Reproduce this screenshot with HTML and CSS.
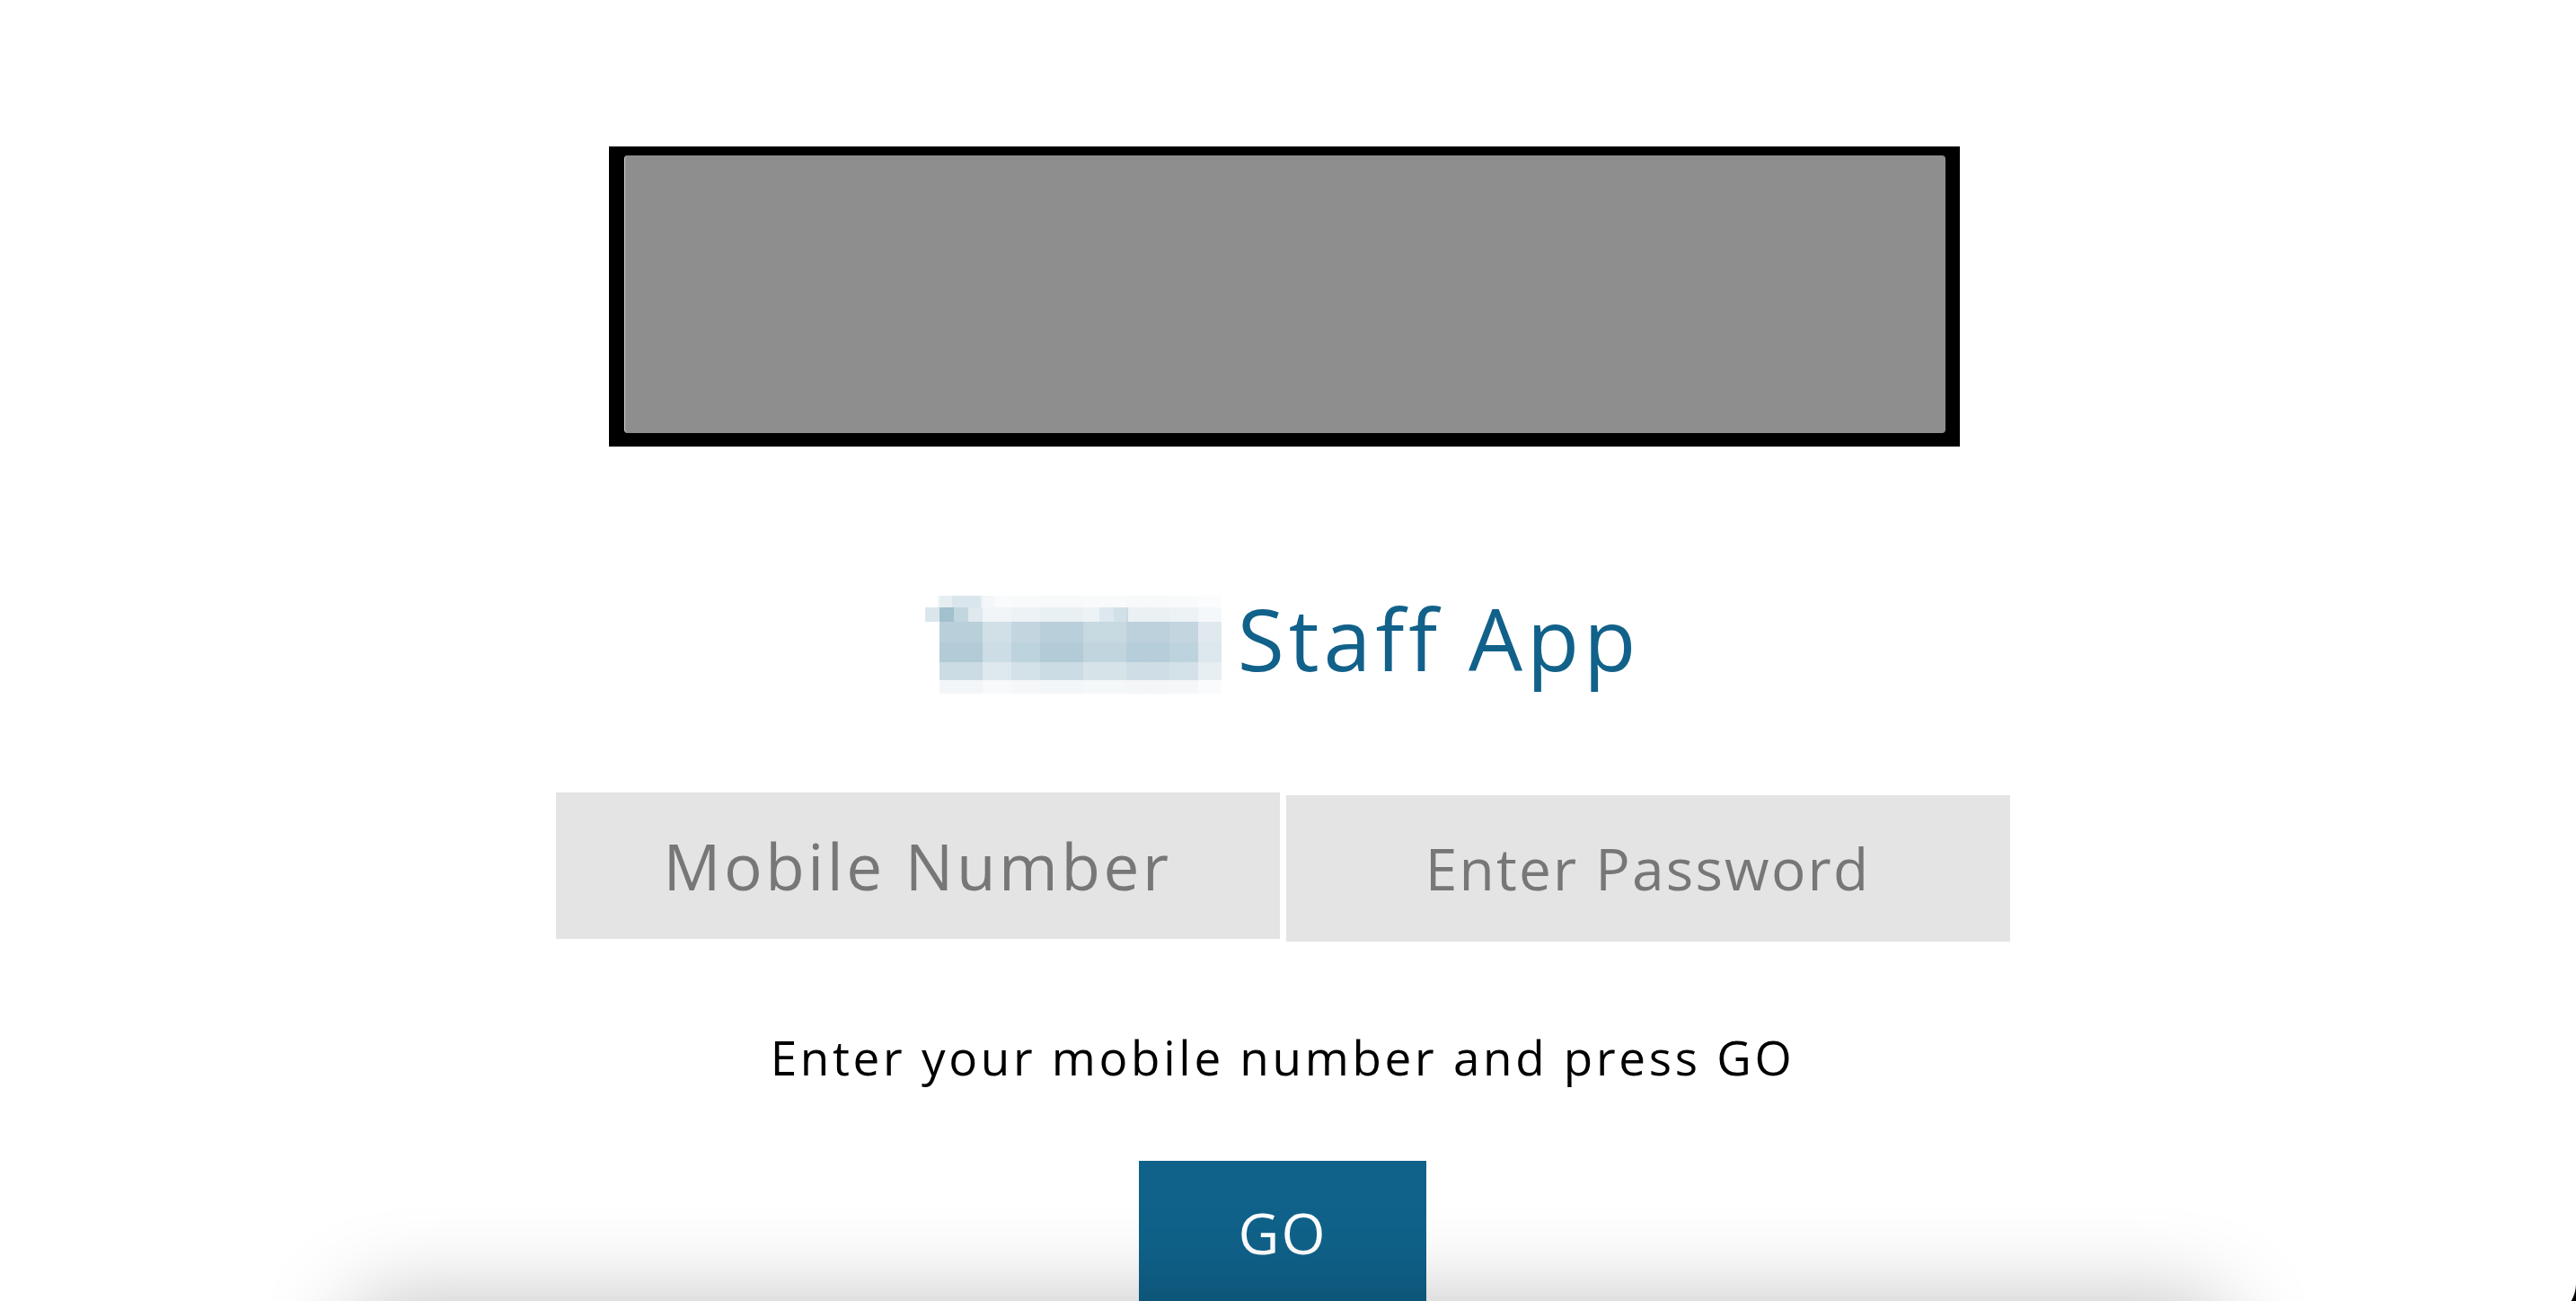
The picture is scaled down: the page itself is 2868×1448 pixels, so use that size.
FILE: index.html
```html
<!DOCTYPE html>
<html lang="en">
<head>
<meta charset="utf-8">
<title>Staff App</title>
<link rel="stylesheet" href="styles.css">
</head>
<body>
<main class="login">
  <div class="logo-frame">
    <div class="logo-image"></div>
  </div>

  <h1 class="app-title">
    <span class="brand-redacted" aria-hidden="true"></span>
    <span class="title-text">Staff App</span>
  </h1>

  <form class="login-form">
    <div class="fields">
      <input class="field field-mobile" type="tel" placeholder="Mobile Number">
      <input class="field field-password" type="password" placeholder="Enter Password">
    </div>
    <p class="hint">Enter your mobile number and press GO</p>
    <button class="go-btn" type="button">GO</button>
  </form>
</main>
<div class="bottom-sheet"></div>
<div class="window-corner"></div>
</body>
</html>
```

FILE: styles.css
```css
* { box-sizing: border-box; }

html, body {
  margin: 0;
  padding: 0;
  background: #ffffff;
  height: 100%;
  overflow: hidden;
}

body {
  font-family: "Open Sans", "Liberation Sans", sans-serif;
}

.login {
  display: flex;
  flex-direction: column;
  align-items: center;
  padding-top: 163px;
  padding-right: 12px;
}

.logo-frame {
  width: 1504px;
  height: 334px;
  background: #000;
  padding: 10px 16px 15px 17px;
  margin-left: 4px;
}

.logo-image {
  width: 100%;
  height: 100%;
  background: #8e8e8e;
  border-radius: 4px;
  border-left: 1px solid #d8d8d8;
}

.app-title {
  margin: 166px 0 0 0;
  display: flex;
  align-items: flex-start;
  gap: 18px;
  font-weight: 400;
  height: 109px;
}

.brand-redacted {
  width: 330px;
  height: 109px;
  background-color: #ffffff;
  background-repeat: no-repeat;
  background-image:
    /* horizontal variation overlay */
    linear-gradient(to right,
      rgba(255,255,255,0.5) 0 16px,
      rgba(255,255,255,0) 16px 64px,
      rgba(255,255,255,0.35) 64px 96px,
      rgba(255,255,255,0.15) 96px 128px,
      rgba(255,255,255,0) 128px 176px,
      rgba(255,255,255,0.2) 176px 224px,
      rgba(255,255,255,0.05) 224px 272px,
      rgba(255,255,255,0.15) 272px 304px,
      rgba(255,255,255,0.55) 304px 330px),
    /* row 2 darker left patch */
    linear-gradient(to right, #b7cdd8 0 16px, #a2c0ce 16px 32px, #c2d6df 32px 48px, #dfe9ee 48px 64px),
    /* row 2 mid patch */
    linear-gradient(to right, #d5e3ea 0 16px, #c6d9e1 16px 32px),
    /* row 1 left patch */
    linear-gradient(to right, #e6eef2 0 16px, #d9e6ec 16px 48px, #eef3f6 48px 64px),
    /* base rows */
    linear-gradient(to bottom,
      #f7f9fa 0 13px,
      #e9f0f3 13px 29px,
      #b9cfda 29px 52px,
      #b2cbd7 52px 74px,
      #ccdce4 74px 94px,
      #f3f6f8 94px 109px);
  background-size:
    330px 109px,
    64px 16px,
    32px 16px,
    64px 13px,
    330px 109px;
  background-position:
    0 0,
    0 13px,
    194px 13px,
    14px 0,
    16px 0;
}

.title-text {
  font-size: 95px;
  line-height: 95px;
  color: #11618a;
  letter-spacing: 5px;
  white-space: nowrap;
}

.login-form {
  display: flex;
  flex-direction: column;
  align-items: center;
  margin: 110px 0 0 0;
}

.fields {
  display: flex;
  align-items: baseline;
  gap: 7px;
}

.field {
  width: 806px;
  height: 163px;
  border: 0;
  padding: 0;
  margin: 0;
  background: #e4e4e4;
  text-align: center;
  font-family: "Open Sans", "Liberation Sans", sans-serif;
  color: #333;
  outline: none;
}

.field::placeholder {
  color: #777777;
  opacity: 1;
}

.field-mobile {
  font-size: 71px;
  letter-spacing: 3.6px;
}

.field-password {
  font-size: 64px;
  letter-spacing: 2.2px;
}

.hint {
  margin: 102px 0 0 0;
  font-size: 53px;
  line-height: 53px;
  color: #000;
  letter-spacing: 3.7px;
}

.go-btn {
  margin-top: 89px;
  width: 320px;
  height: 158px;
  border: 0;
  padding: 0;
  background: #10628a;
  color: #fff;
  font-family: "Open Sans", "Liberation Sans", sans-serif;
  font-size: 63px;
  letter-spacing: 2px;
}

.bottom-sheet {
  position: fixed;
  left: 390px;
  width: 2088px;
  top: 100%;
  height: 300px;
  background: #fff;
  border-radius: 40px;
  box-shadow: 0 0 100px rgba(0, 0, 0, 0.25);
}

.window-corner {
  position: fixed;
  right: 0;
  bottom: 0;
  width: 10px;
  height: 20px;
  background: radial-gradient(circle 40px at -30px 0, transparent 39.5px, #000 40.5px);
}
```
